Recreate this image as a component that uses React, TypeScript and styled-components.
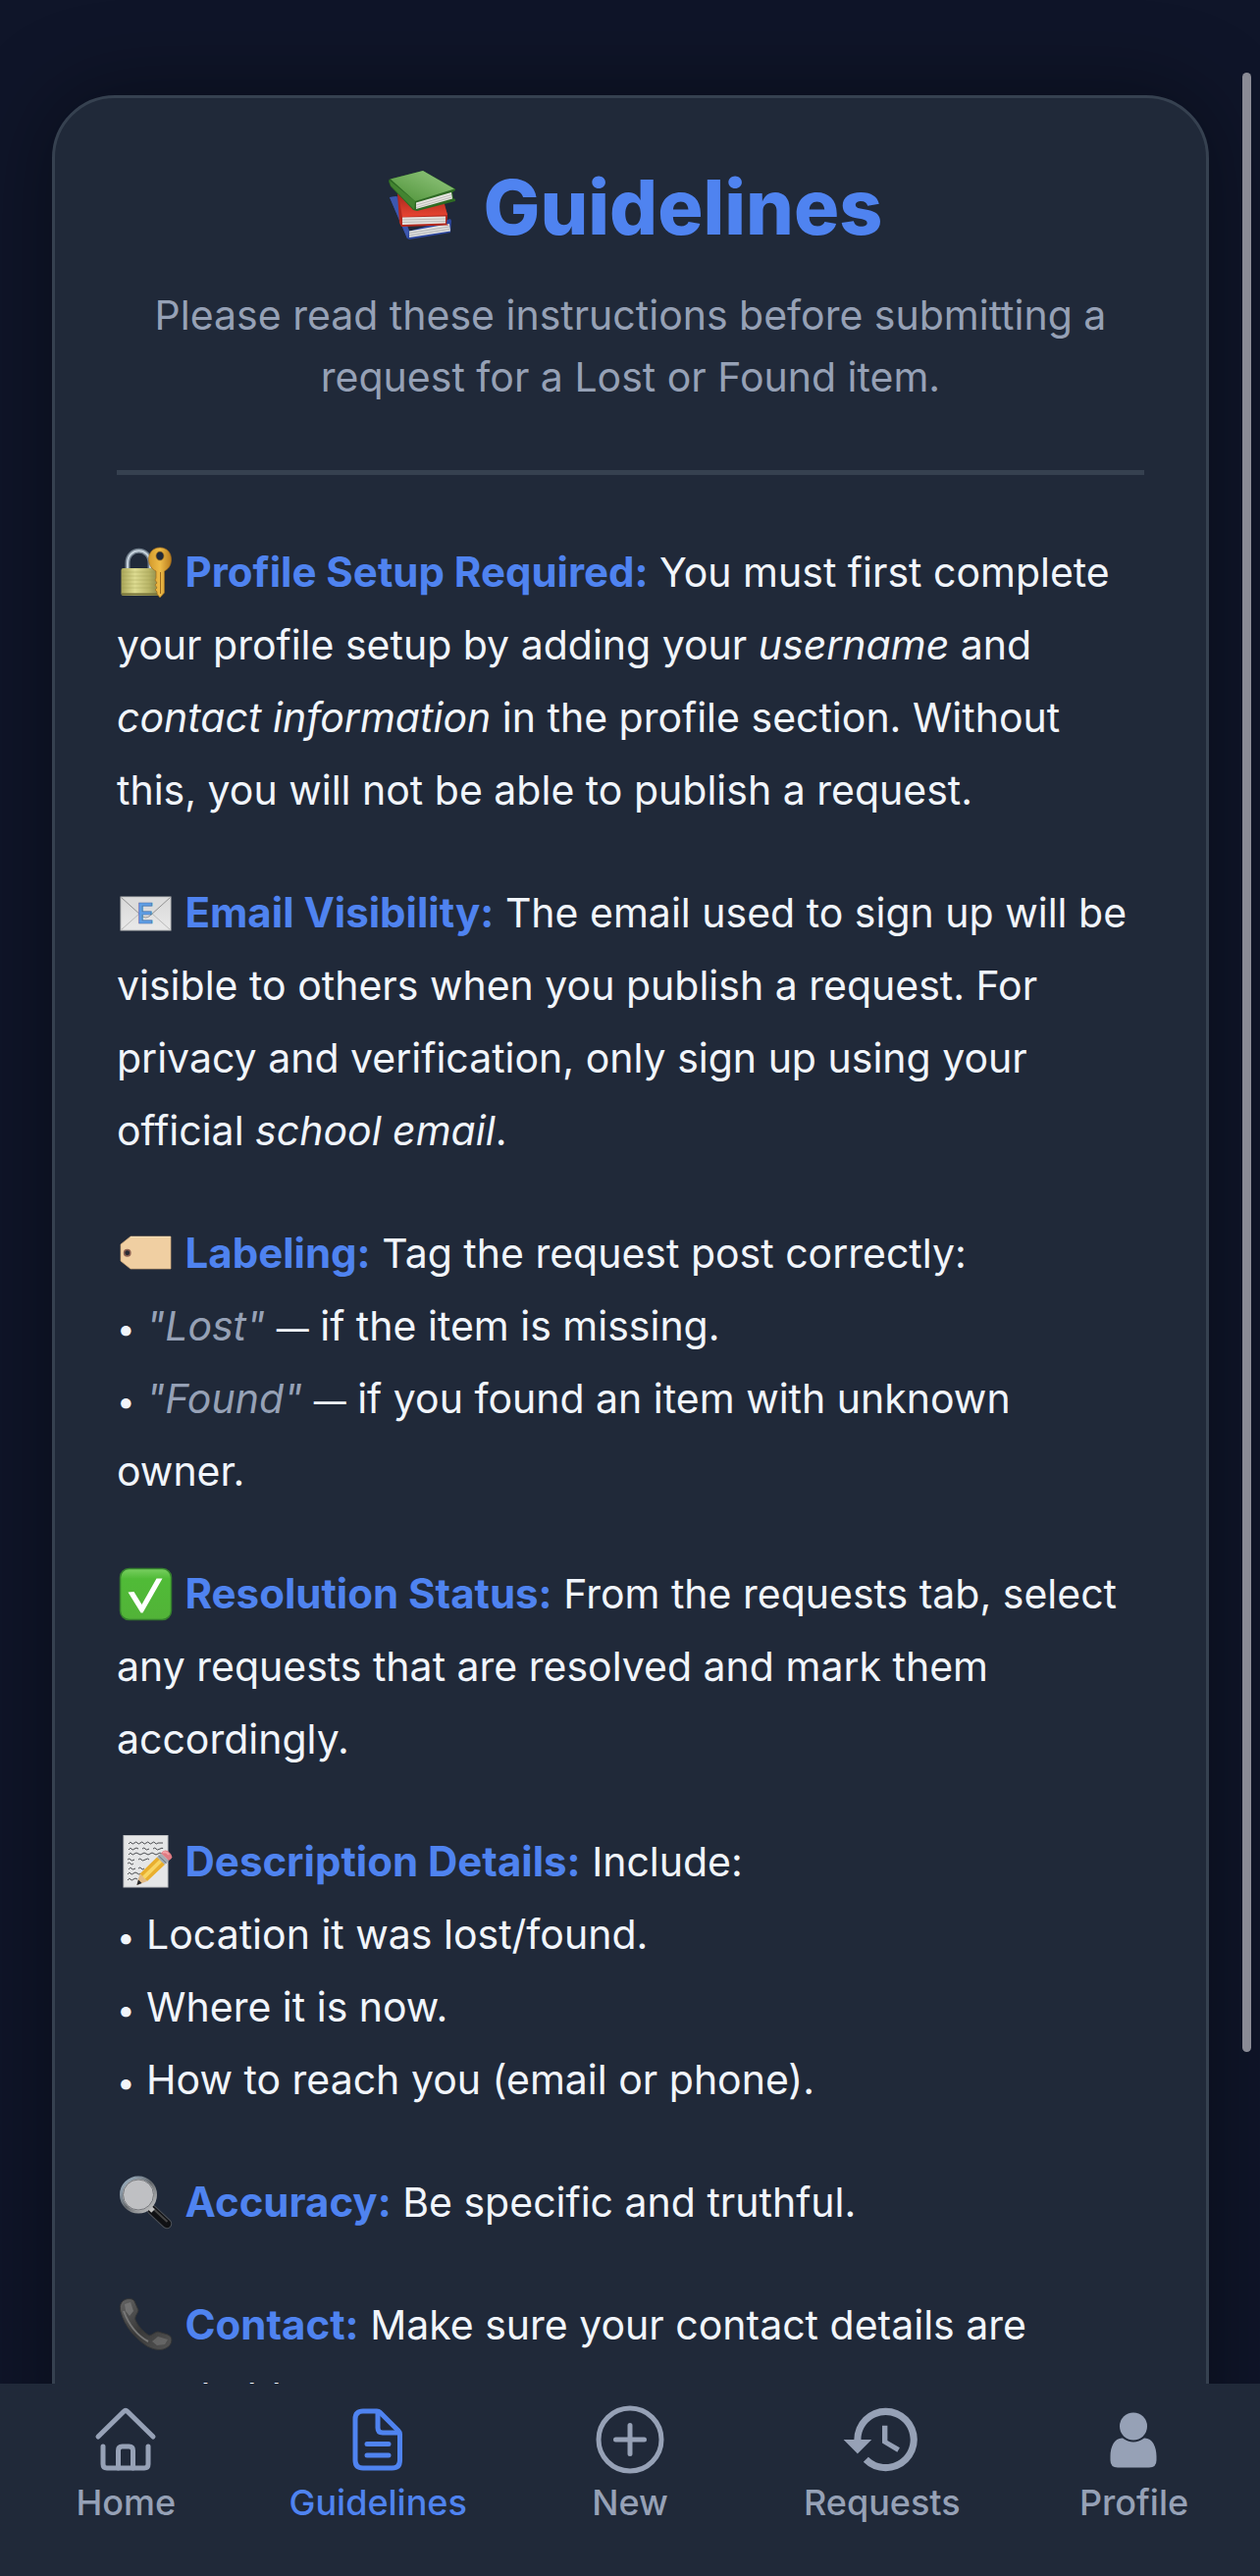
import React from "react";
import styled, { createGlobalStyle } from "styled-components";
import { MdHistory } from "react-icons/md";

const color = {
  page: "#0f1529",
  surface: "#202939",
  line: "#364150",
  text: "#f1f5fb",
  muted: "#96a1b6",
  accent: "#4f83f0",
};

const GlobalStyle = createGlobalStyle`
  *, *::before, *::after { box-sizing: border-box; }
  body {
    margin: 0;
    background: ${color.page};
    color: ${color.text};
    font-family: Inter, "Noto Sans", sans-serif;
  }
`;

const Shell = styled.div`
  position: relative;
  display: flex;
  flex-direction: column;
  height: 100vh;
  overflow: hidden;
`;

const ScrollArea = styled.main`
  flex: 1;
  min-height: 0;
  overflow-y: auto;
  scrollbar-width: none;
  padding: 97px 52px 97px 53px;
`;

const ScrollThumb = styled.div`
  position: absolute;
  top: 74px;
  right: 9px;
  bottom: 534px;
  width: 9px;
  border-radius: 5px;
  background: #8a8b95;
`;

const Card = styled.article`
  padding: 63px;
  border: 3px solid ${color.line};
  border-radius: 64px;
  background: ${color.surface};
  box-shadow: 0 0 90px rgba(0, 0, 0, 0.4);
`;

const Header = styled.header`
  padding-bottom: 63px;
  border-bottom: 5px solid ${color.line};
  text-align: center;
`;

const Title = styled.h1`
  margin: 0 0 31px;
  color: ${color.accent};
  font-size: 77px;
  font-weight: 800;
  line-height: 96px;

  svg {
    margin-right: 6px;
  }
`;

const Subtitle = styled.p`
  margin: 0;
  color: ${color.muted};
  font-size: 41px;
  line-height: 63px;
`;

const Rules = styled.div`
  display: flex;
  flex-direction: column;
  gap: 51px;
  padding-top: 62px;
`;

const Rule = styled.p`
  margin: 0;
  font-size: 41px;
  line-height: 74px;
`;

const Term = styled.strong`
  color: ${color.accent};
  font-size: 42px;
  font-weight: 700;
  line-height: 1;
`;

const Tag = styled.em`
  color: ${color.muted};
`;

const Mark = styled.span`
  font-size: 33px;
  line-height: 1;
`;

const Pictograph = styled.svg<{ $size: number; $drop: number }>`
  width: ${(p) => p.$size}px;
  height: ${(p) => p.$size}px;
  vertical-align: -${(p) => p.$drop}px;
`;

const TabBar = styled.nav`
  display: flex;
  flex: none;
  height: 196px;
  padding-top: 14px;
  background: ${color.surface};
`;

const Tab = styled.a<{ $active?: boolean }>`
  display: flex;
  flex: 1;
  flex-direction: column;
  align-items: center;
  color: ${(p) => (p.$active ? color.accent : color.muted)};
  font-size: 36px;
  font-weight: 500;
  line-height: 42px;
  text-decoration: none;

  svg {
    width: 86px;
    height: 86px;
  }
`;

const Books = () => (
  <Pictograph $size={84} $drop={12} viewBox="0 0 84 84" aria-hidden="true">
    <defs>
      <linearGradient id="bookGreen" x1="0" y1="1" x2="1" y2="0">
        <stop offset="0" stopColor="#4c9136" />
        <stop offset="1" stopColor="#97c983" />
      </linearGradient>
      <linearGradient id="bookRed" x1="0" y1="0" x2="0" y2="1">
        <stop offset="0" stopColor="#a9281c" />
        <stop offset="1" stopColor="#e84532" />
      </linearGradient>
    </defs>
    <path d="M11 34 20 33 30 69 73 56 74 58 73 70 31 77 29 76Z" fill="#2d479f" />
    <path d="M11 34 29 76 31 68 18 33Z" fill="#3c57b0" />
    <path d="M31 68.500 72 61 73 68.500 31 75Z" fill="#dfe0df" />
    <path d="M31 70.500 72 64M31 73 72 66.500" stroke="#b1b3b5" />
    <path d="M19 30 66 37 70 52 70 54 69 61 71 62.500 23 64 21 60Z" fill="#b32a1f" />
    <path d="M20 31 66 39 70 52 24 54Z" fill="url(#bookRed)" />
    <path d="M24 54.500 68 53.500 68 60.500 24 62Z" fill="#e4e3df" />
    <path d="M24 57 68 56M24 59.500 68 58.500" stroke="#bcb9b5" />
    <path d="M10 18 Q10 15 13 15 L45 7 78 25.500 78 27 75 29 76 35 78 36 78 38 39 48 35 47 12 23Z" fill="#2e6a24" />
    <path d="M12 15.500 45 7 77 25.500 37 38Z" fill="url(#bookGreen)" />
    <path d="M11 17 37 38 36 46.500 12 22Z" fill="#438431" />
    <path d="M38 39.500 74 29 75 35.500 38 46Z" fill="#e7e6e2" />
    <path d="M38 42 74 31.500M38 44.500 74 34" stroke="#bdbdb9" />
  </Pictograph>
);

const Emoji = ({ children }: { children: React.ReactNode }) => (
  <Pictograph $size={58} $drop={14} viewBox="0 0 58 58" aria-hidden="true">
    {children}
  </Pictograph>
);

const LockWithKey = () => (
  <Emoji>
    <defs>
      <linearGradient id="brass">
        <stop offset="0" stopColor="#a9a557" />
        <stop offset=".35" stopColor="#dddb91" />
        <stop offset=".7" stopColor="#bab668" />
        <stop offset="1" stopColor="#858144" />
      </linearGradient>
      <linearGradient id="gold">
        <stop offset="0" stopColor="#d39a2c" />
        <stop offset=".5" stopColor="#eebc48" />
        <stop offset="1" stopColor="#b97c1d" />
      </linearGradient>
    </defs>
    <path d="M11 27V20C11 3 34 3 34 20V27" fill="none" stroke="#73808e" strokeWidth="5" />
    <path d="M11 27V20C11 3 34 3 34 20V27" fill="none" stroke="#c5d1dc" strokeWidth="2" />
    <rect x="4.500" y="25" width="40" height="28" rx="2" fill="url(#brass)" />
    <path d="M5 29H44M5 33H44M5 37H44M5 41H44M5 45H44" stroke="#99954d" strokeOpacity=".35" />
    <path d="M5 51.500H44" stroke="#747038" strokeWidth="2" />
    <path fillRule="evenodd" d="M44 4C51 4 55.500 9 55.500 16 55.500 23 52 26 48.500 28V50L44 55 41 51V49L39 47 41 45 39 42 41 40 39 37 40 35V28C36 26 32.500 22 32.500 16 32.500 9 37 4 44 4ZM44 8A4 4.500 0 1 0 44 17 4 4.500 0 1 0 44 8Z" fill="url(#gold)" stroke="#9d6b1e" strokeWidth=".7" />
    <path d="M44.500 29V51" stroke="#9b681c" />
  </Emoji>
);

const EMail = () => (
  <Emoji>
    <defs>
      <linearGradient id="paper" x1="0" y1="0" x2="0" y2="1">
        <stop offset="0" stopColor="#d8d8d8" />
        <stop offset="1" stopColor="#e9e9e9" />
      </linearGradient>
    </defs>
    <rect x="4" y="13" width="51" height="34" fill="url(#paper)" stroke="#b7b9ba" />
    <path d="M4.500 46.500 23 30M54.500 46.500 36 30" stroke="#bababa" fill="none" />
    <path d="M4.500 13.500 25 32Q29.500 36 34 32L54.500 13.500" fill="#dcdcdc" stroke="#929292" />
    <text x="29" y="39.500" textAnchor="middle" fontSize="28" fontWeight="600" fill="#5f9fe6" stroke="#3f6faa" strokeWidth=".7">E</text>
  </Emoji>
);

const LabelTag = () => (
  <Emoji>
    <path d="M14 12H55V45H14L4 37V20Z" fill="#f0cfa2" stroke="#cda87a" strokeWidth=".7" />
    <path d="M14 12.500H54.500" stroke="#fae0b8" />
    <circle cx="10.700" cy="28.700" r="3.200" fill="#292b34" stroke="#8d6253" strokeWidth="1.500" />
  </Emoji>
);

const CheckMark = () => (
  <Emoji>
    <defs>
      <linearGradient id="green" x1="0" y1="0" x2="0" y2="1">
        <stop offset="0" stopColor="#79cf61" />
        <stop offset=".2" stopColor="#50bb37" />
        <stop offset="1" stopColor="#52b338" />
      </linearGradient>
    </defs>
    <rect x="3.500" y="3.500" width="52" height="52" rx="9" fill="url(#green)" stroke="#347f2d" strokeWidth="1.500" />
    <path d="M11.500 27.500 17.500 27 25.500 40 40.500 13.500H46.500L26.500 48.500H24.500Z" fill="#fff" />
  </Emoji>
);

const Memo = () => (
  <Emoji>
    <rect x="7" y="2.500" width="45" height="52.500" fill="#e5e6e7" stroke="#c2c4c7" />
    <path
      d="M12 11q2-3 3-1t3 0 3 0 3 0 3 0 3 0 3 0 3 0 3 0 3 0h5M12 17q2-3 3-1t3 0 4 0M26 16q2-2 3 0t4 0M37 16q2-2 3 0t4 0 3 0M12 22q2-3 3-1t3 0 4 0 4 0 4 0 4 0 4 0 4 0 4 0M11 27q2-2 3 0t4 0M22 27q2-2 3 0t4 0 4 0M11 31q2-2 3 0t3 0M12 37q2-3 3-1t4 0M22 36q2-2 3 0t3 0M11 42q2-3 3-1t3 0 4 0 3 0M11 48q2-3 3-1t3 0 4 0"
      fill="none"
      stroke="#4c4e52"
      strokeWidth="1"
    />
    <path d="M20 53 22 46 41 25 49 31 29 49Z" fill="#8f9096" fillOpacity=".5" />
    <path d="M23.500 41.500 41 24.500 49 32 31 49Z" fill="#e9af2e" />
    <path d="M26 44 43.500 27 46 29.500 28.500 47Z" fill="#f8d564" />
    <path d="M23.500 41.500 31 49 20.500 53Z" fill="#e2bb86" />
    <path d="M22 47.500 25.500 51 20.500 53Z" fill="#24262b" />
    <path d="M41 24.500 45 20.500 53 28 49 32Z" fill="#a5adb3" />
    <path d="M42.500 23 50.500 30.500" stroke="#67727c" />
    <path d="M45 20.500Q49 15 54 20T53 28Z" fill="#df7b83" />
    <path d="M47 20Q50 18 53 22" stroke="#f1a2a7" strokeWidth="2" fill="none" />
  </Emoji>
);

const Magnifier = () => (
  <Emoji>
    <defs>
      <linearGradient id="rim" x1="0" y1="0" x2="1" y2="1">
        <stop offset="0" stopColor="#a6bdd0" />
        <stop offset=".5" stopColor="#63676c" />
        <stop offset="1" stopColor="#d2d2d2" />
      </linearGradient>
    </defs>
    <path d="M36 37 51 51" stroke="#4d5259" strokeWidth="10.500" strokeLinecap="round" />
    <path d="M36 37 51 51" stroke="#101114" strokeWidth="8.500" strokeLinecap="round" />
    <path d="M37.500 36 51.500 49" stroke="#474747" strokeWidth="2" />
    <path d="M34 35 37 38" stroke="#bfbfbf" strokeWidth="5" />
    <circle cx="22" cy="21.500" r="17.500" fill="#bfc0c3" stroke="url(#rim)" strokeWidth="3" />
    <circle cx="22" cy="21.500" r="15.500" fill="none" stroke="#76787c" />
  </Emoji>
);

const Handset = () => (
  <Emoji>
    <defs>
      <linearGradient id="ebony" x1="0" y1="0" x2="1" y2="1">
        <stop offset="0" stopColor="#656565" />
        <stop offset=".5" stopColor="#393939" />
        <stop offset="1" stopColor="#555" />
      </linearGradient>
    </defs>
    <path d="M5 6C9 1 17 2 18 5L22 14C22 17 18 20 19 24 22 31 27 36 33 40 37 39 39 36 42 36L52 39C57 41 57 47 53 51 46 57 37 54 31 51 19 43 8 31 4 16 3 12 3 9 5 6Z" fill="url(#ebony)" stroke="#343536" />
    <path d="M7 15C13 31 21 40 32 46" fill="none" stroke="#777" strokeWidth="2" />
    <path d="M8 8 14 6 17 15 13 20 9 15Z" fill="#7d7d7d" fillOpacity=".7" />
    <path d="M36 46 42 41 52 44 49 49 41 50Z" fill="#777" fillOpacity=".6" />
  </Emoji>
);

const strokeProps = {
  viewBox: "0 0 86 86",
  fill: "none",
  stroke: "currentColor",
  strokeWidth: 5,
  strokeLinecap: "round" as const,
  strokeLinejoin: "round" as const,
  "aria-hidden": true,
};

const HomeIcon = () => (
  <svg {...strokeProps}>
    <path d="M15 40 41 14.500Q43 12.500 45 14.500L71 40" />
    <path d="M20 50V68Q20 72 24 72H62Q66 72 66 68V50" />
    <path d="M35.500 72V54Q35.500 50 39.500 50H46.500Q50.500 50 50.500 54V72" />
  </svg>
);

const DocumentIcon = () => (
  <svg {...strokeProps}>
    <path d="M28 14H42Q44 14 45 15L64 34Q65.500 35.500 65.500 37.500V64Q65.500 72 57.500 72H28Q20 72 20 64V22Q20 14 28 14Z" />
    <path d="M43 15V31Q43 36 48 36H64" />
    <path d="M32 47.500H54M32 59H54" />
  </svg>
);

const PlusCircleIcon = () => (
  <svg {...strokeProps}>
    <circle cx="43" cy="43" r="32" />
    <path d="M43 28.500V57.500M28.500 43H57.500" />
  </svg>
);

const PersonIcon = () => (
  <svg viewBox="0 0 86 86" fill="currentColor" aria-hidden="true">
    <circle cx="42" cy="29.500" r="14" />
    <path d="M31 41.500C23 41 18.500 50 18.500 60V64Q18.500 71.500 26 71.500H58Q65.500 71.500 65.500 64V60C65.500 50 61 41 53 41.500Q42 49.500 31 41.500Z" />
  </svg>
);

const tabs = [
  { label: "Home", href: "#home", icon: <HomeIcon /> },
  { label: "Guidelines", href: "#guidelines", icon: <DocumentIcon />, active: true },
  { label: "New", href: "#new", icon: <PlusCircleIcon /> },
  { label: "Requests", href: "#requests", icon: <MdHistory aria-hidden="true" /> },
  { label: "Profile", href: "#profile", icon: <PersonIcon /> },
];

export default function App() {
  return (
    <Shell>
      <GlobalStyle />
      <ScrollArea>
        <Card>
          <Header>
            <Title>
              <Books /> Guidelines
            </Title>
            <Subtitle>
              Please read these instructions before submitting a request for a Lost or Found item.
            </Subtitle>
          </Header>
          <Rules>
            <Rule>
              <LockWithKey /> <Term>Profile Setup Required:</Term> You must first complete your profile
              setup by adding your <em>username</em> and <em>contact information</em> in the profile
              section. Without this, you will not be able to publish a request.
            </Rule>
            <Rule>
              <EMail /> <Term>Email Visibility:</Term> The email used to sign up will be visible to
              others when you publish a request. For privacy and verification, only sign up using your
              official <em>school email</em>.
            </Rule>
            <Rule>
              <LabelTag /> <Term>Labeling:</Term> Tag the request post correctly:
              <br />
              <Mark>•</Mark> <Tag>"Lost"</Tag> <Mark>—</Mark> if the item is missing.
              <br />
              <Mark>•</Mark> <Tag>"Found"</Tag> <Mark>—</Mark> if you found an item with unknown owner.
            </Rule>
            <Rule>
              <CheckMark /> <Term>Resolution Status:</Term> From the requests tab, select any requests
              that are resolved and mark them accordingly.
            </Rule>
            <Rule>
              <Memo /> <Term>Description Details:</Term> Include:
              <br />
              <Mark>•</Mark> Location it was lost/found.
              <br />
              <Mark>•</Mark> Where it is now.
              <br />
              <Mark>•</Mark> How to reach you (email or phone).
            </Rule>
            <Rule>
              <Magnifier /> <Term>Accuracy:</Term> Be specific and truthful.
            </Rule>
            <Rule>
              <Handset /> <Term>Contact:</Term> Make sure your contact details are reachable.
            </Rule>
          </Rules>
        </Card>
      </ScrollArea>
      <ScrollThumb />
      <TabBar aria-label="Main">
        {tabs.map((tab) => (
          <Tab
            key={tab.label}
            href={tab.href}
            $active={tab.active}
            aria-current={tab.active ? "page" : undefined}
          >
            {tab.icon}
            {tab.label}
          </Tab>
        ))}
      </TabBar>
    </Shell>
  );
}
